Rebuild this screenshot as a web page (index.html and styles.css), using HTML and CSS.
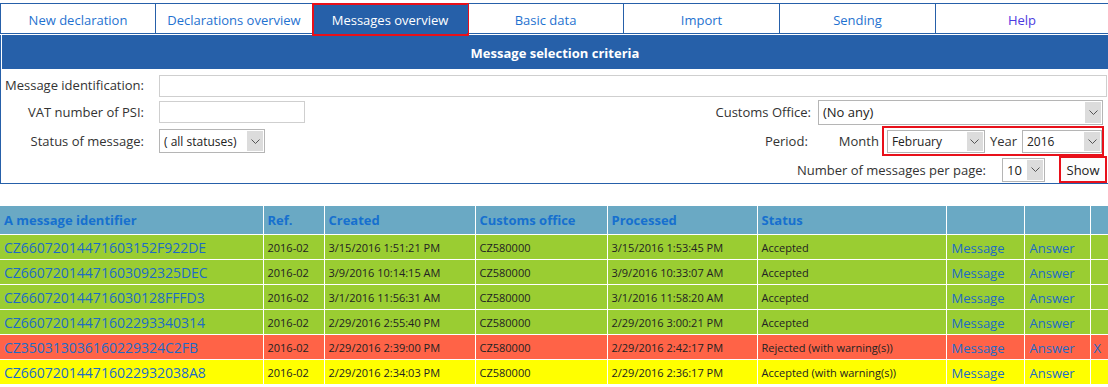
FILE: index.html
```html
<!DOCTYPE html>
<html lang="en">
<head>
<meta charset="utf-8">
<title>Messages overview</title>
<link rel="stylesheet" href="styles.css">
</head>
<body>
<nav class="tabs">
  <a class="tab">New declaration</a>
  <a class="tab">Declarations overview</a>
  <a class="tab active">Messages overview</a>
  <a class="tab">Basic data</a>
  <a class="tab">Import</a>
  <a class="tab">Sending</a>
  <a class="tab visited">Help</a>
</nav>

<section class="panel">
  <h1 class="panel-title">Message selection criteria</h1>
  <div class="form">
    <div class="row r1">
      <label class="lbl">Message identification:</label>
      <input class="txt wide" type="text">
    </div>
    <div class="row r2">
      <div class="left">
        <label class="lbl">VAT number of PSI:</label>
        <input class="txt vat" type="text">
      </div>
      <div class="right office-grp">
        <label class="rlbl">Customs Office:</label>
        <div class="sel office"><span class="val">(No any)</span><span class="arr"><svg width="9" height="5" viewBox="0 0 9 5"><path d="M0.5 0.5 L4.5 4.5 L8.5 0.5" fill="none" stroke="#555" stroke-width="1"/></svg></span></div>
      </div>
    </div>
    <div class="row r3">
      <div class="left">
        <label class="lbl">Status of message:</label>
        <div class="sel status"><span class="val">( all statuses)</span><span class="arr"><svg width="9" height="5" viewBox="0 0 9 5"><path d="M0.5 0.5 L4.5 4.5 L8.5 0.5" fill="none" stroke="#555" stroke-width="1"/></svg></span></div>
      </div>
      <div class="right period-grp">
        <label class="rlbl">Period:</label>
        <span class="word month-word">Month</span>
        <div class="mark period">
          <div class="sel month"><span class="val">February</span><span class="arr"><svg width="9" height="5" viewBox="0 0 9 5"><path d="M0.5 0.5 L4.5 4.5 L8.5 0.5" fill="none" stroke="#555" stroke-width="1"/></svg></span></div>
          <span class="word">Year</span>
          <div class="sel year"><span class="val">2016</span><span class="arr"><svg width="9" height="5" viewBox="0 0 9 5"><path d="M0.5 0.5 L4.5 4.5 L8.5 0.5" fill="none" stroke="#555" stroke-width="1"/></svg></span></div>
        </div>
      </div>
    </div>
    <div class="row r4">
      <div class="right count-grp">
        <label class="plbl">Number of messages per page:</label>
        <div class="sel count"><span class="val">10</span><span class="arr"><svg width="9" height="5" viewBox="0 0 9 5"><path d="M0.5 0.5 L4.5 4.5 L8.5 0.5" fill="none" stroke="#555" stroke-width="1"/></svg></span></div>
        <button class="show" type="button">Show</button>
      </div>
    </div>
  </div>
</section>

<table class="grid">
  <colgroup>
    <col class="c-id"><col class="c-ref"><col class="c-cr"><col class="c-off"><col class="c-pr"><col class="c-st"><col class="c-msg"><col class="c-ans"><col class="c-x">
  </colgroup>
  <thead>
    <tr>
      <th>A message identifier</th><th>Ref.</th><th>Created</th><th>Customs office</th><th>Processed</th><th>Status</th><th></th><th></th><th></th>
    </tr>
  </thead>
  <tbody>
    <tr class="ok">
      <td><a class="id">CZ66072014471603152F922DE</a></td><td>2016-02</td><td>3/15/2016 1:51:21 PM</td><td>CZ580000</td><td>3/15/2016 1:53:45 PM</td><td>Accepted</td><td><a class="lnk">Message</a></td><td><a class="lnk">Answer</a></td><td></td>
    </tr>
    <tr class="ok">
      <td><a class="id">CZ66072014471603092325DEC</a></td><td>2016-02</td><td>3/9/2016 10:14:15 AM</td><td>CZ580000</td><td>3/9/2016 10:33:07 AM</td><td>Accepted</td><td><a class="lnk">Message</a></td><td><a class="lnk">Answer</a></td><td></td>
    </tr>
    <tr class="ok">
      <td><a class="id">CZ660720144716030128FFFD3</a></td><td>2016-02</td><td>3/1/2016 11:56:31 AM</td><td>CZ580000</td><td>3/1/2016 11:58:20 AM</td><td>Accepted</td><td><a class="lnk">Message</a></td><td><a class="lnk">Answer</a></td><td></td>
    </tr>
    <tr class="ok">
      <td><a class="id">CZ66072014471602293340314</a></td><td>2016-02</td><td>2/29/2016 2:55:40 PM</td><td>CZ580000</td><td>2/29/2016 3:00:21 PM</td><td>Accepted</td><td><a class="lnk">Message</a></td><td><a class="lnk">Answer</a></td><td></td>
    </tr>
    <tr class="rej">
      <td><a class="id">CZ350313036160229324C2FB</a></td><td>2016-02</td><td>2/29/2016 2:39:00 PM</td><td>CZ580000</td><td>2/29/2016 2:42:17 PM</td><td>Rejected (with warning(s))</td><td><a class="lnk">Message</a></td><td><a class="lnk">Answer</a></td><td><a class="lnk x">X</a></td>
    </tr>
    <tr class="warn">
      <td><a class="id">CZ660720144716022932038A8</a></td><td>2016-02</td><td>2/29/2016 2:34:03 PM</td><td>CZ580000</td><td>2/29/2016 2:36:17 PM</td><td>Accepted (with warning(s))</td><td><a class="lnk">Message</a></td><td><a class="lnk">Answer</a></td><td></td>
    </tr>
  </tbody>
</table>
</body>
</html>
```

FILE: styles.css
```css
* { box-sizing: border-box; }

body {
  margin: 0;
  background: #fff;
  font-family: "Open Sans", "Noto Sans", "DejaVu Sans", sans-serif;
  color: #333;
  overflow: hidden;
}

/* ---------- top navigation ---------- */
.tabs {
  margin-top: 3px;
  display: grid;
  grid-template-columns: 155px 157px 155px 156px 156px 156px 1fr;
  border-top: 1px solid #2660a9;
  border-bottom: 1px solid #2660a9;
  height: 31px;
}
.tab {
  position: relative;
  display: flex;
  align-items: center;
  justify-content: center;
  border-left: 1px solid #2660a9;
  font-size: 13px;
  color: #1f72d0;
  text-decoration: none;
  padding-top: 2px;
}
.tab.visited { color: #4b3be0; }
.tab.active {
  background: #2660a9;
  color: #fff;
}
.tab.active::after {
  content: "";
  position: absolute;
  left: -1px;
  right: -2px;
  top: -1px;
  bottom: -3px;
  border: 2px solid #e8101a;
}

/* ---------- selection panel ---------- */
.panel {
  margin-top: 1px;
  border: 1px solid #2660a9;
  border-top: 0;
  border-right: 0;
  padding-left: 1px;
}
.panel-title {
  margin: 0;
  height: 34px;
  padding-top: 2px;
  background: #2660a9;
  color: #fff;
  font-size: 13px;
  font-weight: bold;
  display: flex;
  align-items: center;
  justify-content: center;
}
.form {
  padding: 5px 3px 0 0;
  font-size: 13px;
  color: #333;
}
.row {
  display: flex;
  align-items: center;
}
.r1 { height: 24px; }
.r2 { height: 28px; }
.r3 { height: 30px; }
.r4 { height: 27px; }

.left {
  display: flex;
  align-items: center;
}
.lbl {
  width: 142px;
  text-align: right;
  margin-right: 15px;
}
.r1 .lbl { margin-top: -3px; }
.right {
  margin-left: auto;
  display: flex;
  align-items: center;
}
.rlbl {
  width: 120px;
  text-align: right;
}

.txt {
  height: 22px;
  border: 1px solid #cfcfcf;
  background: #fff;
  font: inherit;
}
.wide { flex: 1; margin-right: -2px; }
.vat { width: 146px; }

.sel {
  display: flex;
  align-items: stretch;
  border: 1px solid #b5b5b5;
  background: #fff;
  font-size: 12px;
  color: #222;
}
.sel .val {
  flex: 1;
  display: flex;
  align-items: center;
  padding-left: 4px;
  white-space: nowrap;
}
.sel .arr {
  width: 16px;
  margin: 1px;
  background: #dcdcdc;
  display: flex;
  align-items: center;
  justify-content: center;
}

.office-grp { margin-right: 2px; }
.office { width: 285px; height: 25px; margin-left: 7px; font-size: 13px; }

.status { width: 106px; height: 24px; }

.period-grp { margin-right: 1px; }
.month-word { margin-left: 31px; margin-right: 3px; }
.word { font-size: 13px; }
.mark {
  display: flex;
  align-items: center;
  border: 2px solid #e8101a;
  height: 30px;
  padding-left: 3px;
}
.month { width: 98px; height: 23px; margin-right: 5px; }
.year { width: 80px; height: 23px; margin-left: 5px; }

.count-grp { margin-right: -2px; }
.plbl { margin-right: 16px; }
.count { width: 43px; height: 24px; font-size: 13px; margin-right: 14px; }
.show {
  height: 27px;
  width: 48px;
  border: 2px solid #e8101a;
  background: #fdfdfd;
  font: inherit;
  font-size: 13px;
  color: #222;
  padding: 0;
}

/* ---------- results table ---------- */
.grid {
  margin-top: 22px;
  width: 1108px;
  border-collapse: collapse;
  table-layout: fixed;
  font-size: 11px;
  color: #222;
}
.c-id { width: 263px; }
.c-ref { width: 61px; }
.c-cr { width: 151px; }
.c-off { width: 132px; }
.c-pr { width: 150px; }
.c-st { width: 189px; }
.c-msg { width: 78px; }
.c-ans { width: 66px; }
.c-x { width: 18px; }

.grid th,
.grid td {
  border: 1px solid #fff;
  padding: 0 4px;
  text-align: left;
  white-space: nowrap;
  overflow: hidden;
}
.grid tr:first-child th { border-top: 0; }
.grid th:first-child,
.grid td:first-child { border-left: 0; }
.grid thead th {
  height: 28px;
  background: #6aa9c4;
  color: #1670cf;
  font-size: 13px;
  font-weight: bold;
}
.grid td { height: 25px; padding-top: 2px; }
.ok td { background: #9acd32; }
.rej td { background: #ff6347; }
.warn td { background: #ffff00; }

.id, .lnk {
  color: #1d6bc6;
  font-size: 13px;
  text-decoration: none;
}
.id { font-size: 14px; }
.grid td:nth-child(7),
.grid td:nth-child(8) { padding-left: 5px; }
.grid td:nth-child(9) { padding-left: 3px; }
```
